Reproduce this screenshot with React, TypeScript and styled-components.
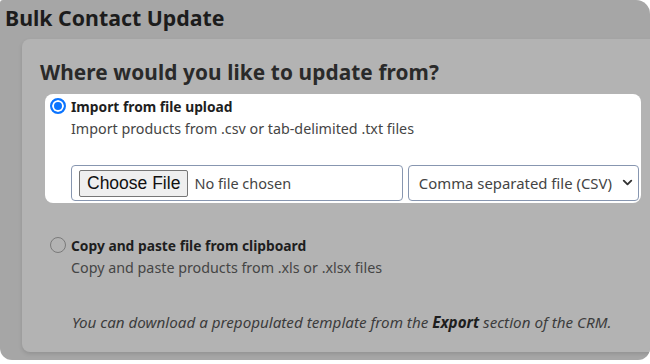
import React, { useState } from 'react';
import styled, { createGlobalStyle } from 'styled-components';
import { ChevronDown } from 'lucide-react';

const GlobalStyle = createGlobalStyle`
  html, body {
    margin: 0;
    padding: 0;
    background: #ffffff;
  }
  body {
    font-family: 'Noto Sans', 'Liberation Sans', sans-serif;
  }
`;

type Source = 'file' | 'clipboard';

function App() {
  const [source, setSource] = useState<Source>('file');
  const [format, setFormat] = useState<string>('csv');
  return (
    <>
      <GlobalStyle />
      <Modal>
        <Header>Bulk Contact Update</Header>
        <Card>
          <Title>Where would you like to update from?</Title>
          <OptionList>
            <OptionBox $active={source === 'file'} onClick={() => setSource('file')}>
              <OptionHead>
                <Radio $checked={source === 'file'} />
                <OptionLabel>Import from file upload</OptionLabel>
              </OptionHead>
              <OptionText>Import products from .csv or tab-delimited .txt files</OptionText>
              <FileRow>
                <FileBox>
                  <FileInput type="file" />
                </FileBox>
                <SelectBox>
                  <FormatSelect value={format} onChange={e => setFormat(e.target.value)}>
                    <option value="csv">Comma separated file (CSV)</option>
                    <option value="txt">Tab delimited file (TXT)</option>
                  </FormatSelect>
                  <Chevron size={15} strokeWidth={3} />
                </SelectBox>
              </FileRow>
            </OptionBox>
            <OptionBox $active={source === 'clipboard'} onClick={() => setSource('clipboard')}>
              <OptionHead>
                <Radio $checked={source === 'clipboard'} />
                <OptionLabel>Copy and paste file from clipboard</OptionLabel>
              </OptionHead>
              <OptionText>Copy and paste products from .xls or .xlsx files</OptionText>
            </OptionBox>
          </OptionList>
          <Note>
            You can download a prepopulated template from the <b>Export</b> section of the CRM.
          </Note>
        </Card>
      </Modal>
    </>
  );
}
export default App;

const Modal = styled.div`
  width: 650px;
  height: 360px;
  background: #a6a6a6;
  border-radius: 3px 14px 12px 12px;
  overflow: hidden;
  display: flex;
  flex-direction: column;
`;
const Header = styled.div`
  height: 39px;
  box-sizing: border-box;
  padding: 3px 0 0 5px;
  font-size: 21.3px;
  font-weight: 700;
  color: #1c1c1c;
`;
const Card = styled.div`
  margin-left: 22px;
  width: 650px;
  height: 313px;
  box-sizing: border-box;
  background: #b3b3b3;
  border-radius: 8px;
  box-shadow: 0 2px 4px rgba(0, 0, 0, 0.12);
  padding: 19px 0 0 18px;
`;
const Title = styled.div`
  font-size: 20.8px;
  font-weight: 700;
  color: #2a2a2a;
  letter-spacing: 0.1px;
  line-height: 29px;
`;
const OptionList = styled.div`
  display: flex;
  flex-direction: column;
  gap: 30px;
  margin: 7px 0 0 5px;
  width: 596px;
`;
const OptionBox = styled.div<{ $active: boolean }>`
  background: ${p => (p.$active ? '#ffffff' : 'transparent')};
  border-radius: 8px;
  padding: 2px 2px 2px 5px;
  cursor: pointer;
`;
const OptionHead = styled.div`
  display: flex;
  align-items: center;
  gap: 5px;
  height: 20px;
`;
const Radio = styled.span<{ $checked: boolean }>`
  width: 16px;
  height: 16px;
  box-sizing: border-box;
  border-radius: 50%;
  border: ${p => (p.$checked ? '2px solid #0b74ff' : '1px solid #7a7a7a')};
  background: ${p => (p.$checked ? '#0b74ff' : 'transparent')};
  box-shadow: ${p => (p.$checked ? 'inset 0 0 0 2px #ffffff' : 'none')};
  flex-shrink: 0;
`;
const OptionLabel = styled.span`
  font-size: 13.8px;
  font-weight: 700;
  color: #1e1e1e;
`;
const OptionText = styled.div`
  margin: 3px 0 0 21px;
  font-size: 14.3px;
  color: #454545;
  line-height: 20px;
`;
const FileRow = styled.div`
  display: flex;
  gap: 5px;
  margin: 26px 0 0 21px;
`;
const FileBox = styled.div`
  width: 333px;
  height: 36px;
  box-sizing: border-box;
  border: 1px solid #8796b0;
  border-radius: 4px;
  display: flex;
  align-items: center;
  padding-left: 7px;
`;
const FileInput = styled.input`
  font-family: 'Noto Sans', 'Liberation Sans', sans-serif;
  font-size: 14.5px;
  color: #444;
  &::file-selector-button {
    font-family: 'Liberation Sans', Arial, sans-serif;
    font-size: 17.5px;
    color: #111;
    background: #efefef;
    border: 1px solid #767676;
    border-radius: 2px;
    padding: 1px 7px;
    margin-right: 6px;
    height: 27px;
  }
`;
const SelectBox = styled.div`
  position: relative;
  width: 232px;
  height: 36px;
`;
const FormatSelect = styled.select`
  appearance: none;
  width: 100%;
  height: 100%;
  box-sizing: border-box;
  border: 1px solid #8796b0;
  border-radius: 4px;
  background: #ffffff;
  padding: 0 0 0 10px;
  font-family: 'Noto Sans', 'Liberation Sans', sans-serif;
  font-size: 14.9px;
  color: #444;
`;
const Chevron = styled(ChevronDown)`
  position: absolute;
  right: 4px;
  top: 10px;
  color: #333;
  pointer-events: none;
`;
const Note = styled.div`
  margin: 32px 0 0 32px;
  font-size: 15.2px;
  font-style: italic;
  color: #3c3c3c;
  b {
    color: #1e1e1e;
  }
`;
